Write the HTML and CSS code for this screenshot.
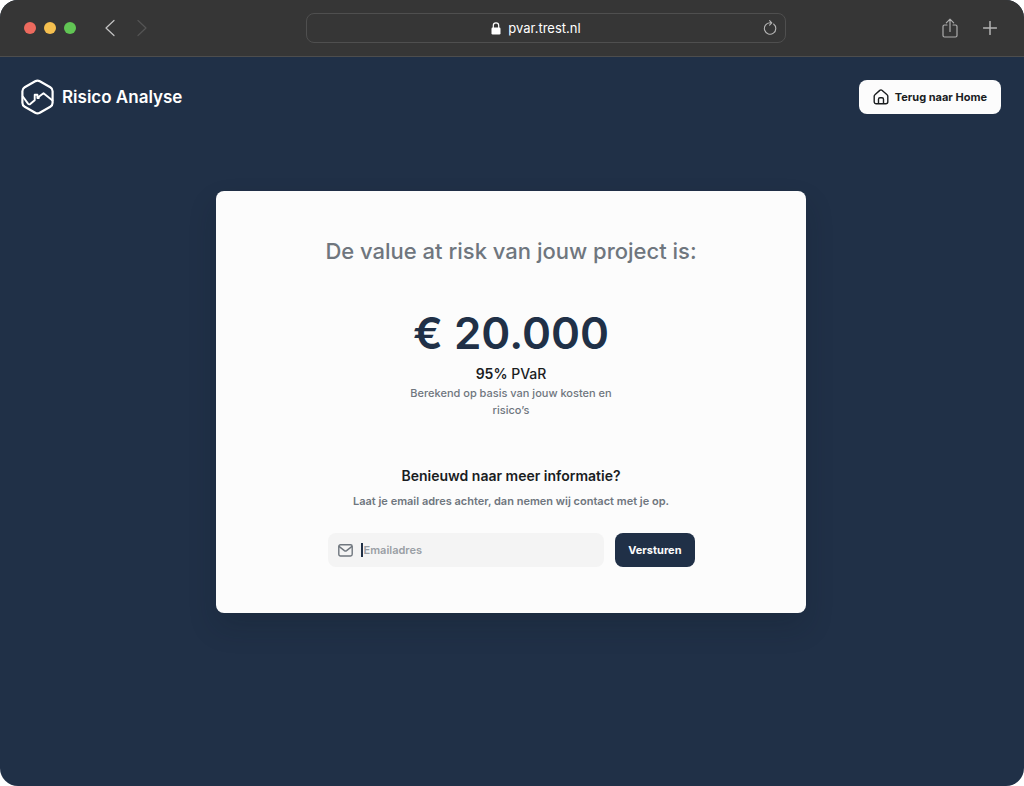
FILE: index.html
```html
<!DOCTYPE html>
<html lang="nl">
<head>
<meta charset="utf-8">
<meta name="viewport" content="width=device-width, initial-scale=1">
<title>Risico Analyse</title>
<link rel="stylesheet" href="styles.css">
</head>
<body>
<div class="window">
  <div class="toolbar">
    <div class="toolbar-side">
      <div class="lights"><span class="light red"></span><span class="light yellow"></span><span class="light green"></span></div>
      <div class="history">
        <button class="tool" aria-label="Vorige"><svg width="12" height="18" viewBox="0 0 12 18"><path d="M10 1.500 2 9l8 7.500" stroke="#c4c4c4" stroke-width="1.200"/></svg></button>
        <button class="tool" aria-label="Volgende"><svg width="12" height="18" viewBox="0 0 12 18"><path d="M2 1.500 10 9l-8 7.500" stroke="#545454" stroke-width="1.200"/></svg></button>
      </div>
    </div>
    <div class="address">
      <svg class="lock" width="10" height="13" viewBox="0 0 10 13"><rect x="0.500" y="5.500" width="9" height="7" rx="1.200" fill="#fff"/><path d="M2.300 6V3.500a2.700 2.700 0 0 1 5.400 0V6" stroke="#fff" stroke-width="1.200"/></svg>
      <span>pvar.trest.nl</span>
      <button class="tool reload" aria-label="Vernieuwen"><svg width="14" height="16" viewBox="0 0 14 16"><path d="M10.600 4A5.700 5.700 0 1 1 7 2.800h1.700M6.600.6l2.200 2.200-2.200 2.300" stroke="#b4b4b4" stroke-width="1.100"/></svg></button>
    </div>
    <div class="toolbar-side end">
      <button class="tool" aria-label="Delen"><svg width="16" height="20" viewBox="0 0 16 20"><path d="M5 7H2.500A1.500 1.500 0 0 0 1 8.500v9A1.500 1.500 0 0 0 2.500 19h11a1.500 1.500 0 0 0 1.500-1.500v-9A1.500 1.500 0 0 0 13.500 7H11M8 13.500V1.200M4.300 4.800 8 1.100l3.700 3.700" stroke="#aeaeae" stroke-width="1.200"/></svg></button>
      <button class="tool" aria-label="Nieuw tabblad"><svg width="14" height="14" viewBox="0 0 14 14"><path d="M7 .5v13M.5 7h13" stroke="#b4b4b4" stroke-width="1.500"/></svg></button>
    </div>
  </div>

  <header class="site-header">
    <div class="brand">
      <svg width="33" height="36" viewBox="0 0 33 36"><path d="M14.200 2.200a4.600 4.600 0 0 1 4.600 0l10.500 6a4.600 4.600 0 0 1 2.300 4v11.600a4.600 4.600 0 0 1-2.300 4l-10.500 6a4.600 4.600 0 0 1-4.600 0L3.700 27.800a4.600 4.600 0 0 1-2.300-4V12.200a4.600 4.600 0 0 1 2.300-4z" stroke="#fff" stroke-width="2.200"/><path d="M1.800 17.500 7 24.600c.8 1 1.700 1 2.500.2l4.200-3.600v-5.400h2.700v3.300h1.400v-1.300l4.700-3.600 9 7.300" stroke="#fff" stroke-width="1.900"/></svg>
      <span>Risico Analyse</span>
    </div>
    <a class="home" href="#">
      <svg width="16" height="16" viewBox="0 0 16 16"><path d="M1.200 7.200c0-.6.2-1.100.7-1.500L6.800 1.400a1.800 1.800 0 0 1 2.400 0l4.900 4.300c.5.400.7.900.7 1.500v5.600a2 2 0 0 1-2 2H3.200a2 2 0 0 1-2-2zM5.500 14.800v-4.600a1.500 1.500 0 0 1 1.500-1.500h2a1.500 1.500 0 0 1 1.500 1.500v4.600" stroke="#1a1d1f" stroke-width="1.400"/></svg>
      Terug naar Home
    </a>
  </header>

  <main class="content">
    <section class="card">
      <h1 class="title">De value at risk van jouw project is:</h1>
      <p class="amount">€ 20.000</p>
      <p class="metric"><strong>95%</strong> PVaR</p>
      <p class="basis">Berekend op basis van jouw kosten en risico’s</p>
      <h2 class="subtitle">Benieuwd naar meer informatie?</h2>
      <p class="hint">Laat je email adres achter, dan nemen wij contact met je op.</p>
      <form class="contact">
        <label class="field">
          <svg width="15" height="13" viewBox="0 0 15 13"><rect x="0.800" y="0.800" width="13.400" height="11.200" rx="1.700" stroke="#6f767e" stroke-width="1.400"/><path d="m1.300 2.600 5.100 4c.7.500 1.500.5 2.200 0l5.100-4" stroke="#6f767e" stroke-width="1.400"/></svg>
          <span class="caret"></span>
          <input type="email" placeholder="Emailadres" aria-label="Emailadres">
        </label>
        <button class="send" type="button">Versturen</button>
      </form>
    </section>
  </main>
</div>
</body>
</html>
```

FILE: styles.css
```css
* {
  box-sizing: border-box;
}

body {
  margin: 0;
  background: #fff;
  color: #1a1d1f;
  font-family: Inter, "Liberation Sans", sans-serif;
}

h1, h2, p {
  margin: 0;
}

svg {
  display: block;
  flex: none;
  fill: none;
  stroke-linecap: round;
  stroke-linejoin: round;
}

button, input {
  font: inherit;
}

.window {
  display: flex;
  flex-direction: column;
  min-height: 100vh;
  border-radius: 18px;
  overflow: hidden;
  background: #203047;
}

.toolbar {
  display: grid;
  grid-template-columns: 258fr minmax(0, 480px) 190fr;
  align-items: center;
  gap: 24px;
  padding: 13px 24px;
  background: #363636;
  border-bottom: 1px solid #4d4d4d;
}

.toolbar-side {
  display: flex;
  align-items: center;
  gap: 28px;
}

.toolbar-side.end {
  justify-content: flex-end;
  gap: 25px;
  padding-right: 3px;
}

.lights {
  display: flex;
  gap: 8px;
}

.light {
  width: 12px;
  height: 12px;
  border-radius: 50%;
}

.red { background: #ed6a5e; }
.yellow { background: #f5bf4f; }
.green { background: #61c554; }

.history {
  display: flex;
  gap: 20px;
}

.tool {
  padding: 2px;
  margin: -2px;
  border: 0;
  background: none;
}

.history .tool {
  margin: 0;
  padding: 0;
}

.address {
  display: flex;
  position: relative;
  align-items: center;
  justify-content: center;
  gap: 7px;
  height: 30px;
  padding-right: 20px;
  border: 1px solid #4f4f4f;
  border-radius: 8px;
  color: #fff;
  font-size: 13px;
}

.reload {
  position: absolute;
  right: 8px;
}

.site-header {
  display: flex;
  align-items: center;
  justify-content: space-between;
  padding: 22px 23px 0 21px;
}

.brand {
  display: flex;
  align-items: center;
  gap: 8px;
  color: #fff;
  font-size: 17px;
  font-weight: 600;
}

.home {
  display: flex;
  align-items: center;
  gap: 6px;
  height: 34px;
  padding: 0 14px;
  border-radius: 8px;
  background: #fcfcfc;
  color: #1a1d1f;
  font-size: 11px;
  font-weight: 700;
  text-decoration: none;
}

.content {
  display: flex;
  justify-content: center;
  padding: 76px 24px 48px 22px;
}

.card {
  display: flex;
  flex-direction: column;
  align-items: center;
  width: 100%;
  max-width: 590px;
  padding: 44px 24px 46px;
  border-radius: 8px;
  background: #fcfcfc;
  box-shadow: 0 14px 28px rgba(15, 25, 35, 0.2);
  text-align: center;
}

.title {
  color: #6f767e;
  font-size: 22px;
  font-weight: 500;
  line-height: 32px;
}

.amount {
  margin-top: 38px;
  color: #203047;
  font-size: 44px;
  font-weight: 600;
  line-height: 56px;
}

.metric {
  margin-top: 3px;
  font-size: 14px;
  font-weight: 500;
  line-height: 20px;
}

.metric strong {
  font-weight: 600;
}

.basis {
  max-width: 220px;
  margin-top: 1px;
  color: #6f767e;
  font-size: 11px;
  font-weight: 500;
  line-height: 17px;
}

.subtitle {
  margin-top: 47px;
  font-size: 14px;
  font-weight: 600;
  line-height: 20px;
}

.hint {
  margin-top: 7px;
  color: #6f767e;
  font-size: 11px;
  font-weight: 600;
  line-height: 17px;
}

.contact {
  display: flex;
  gap: 11px;
  width: 100%;
  max-width: 367px;
  margin-top: 23px;
}

.field {
  display: flex;
  flex: 1;
  align-items: center;
  min-width: 0;
  height: 34px;
  padding: 0 10px;
  border-radius: 8px;
  background: #f4f4f4;
}

.caret {
  width: 2px;
  height: 14px;
  margin: 0 1px 0 8px;
  background: #203047;
}

.field input {
  flex: 1;
  min-width: 0;
  padding: 0;
  border: 0;
  outline: 0;
  background: none;
  color: #1a1d1f;
  font-size: 11px;
  font-weight: 600;
}

.field input::placeholder {
  color: #9a9fa5;
  opacity: 1;
}

.send {
  height: 34px;
  padding: 0 13px;
  border: 0;
  border-radius: 8px;
  background: #203047;
  color: #fcfcfc;
  font-size: 11px;
  font-weight: 700;
}
```
